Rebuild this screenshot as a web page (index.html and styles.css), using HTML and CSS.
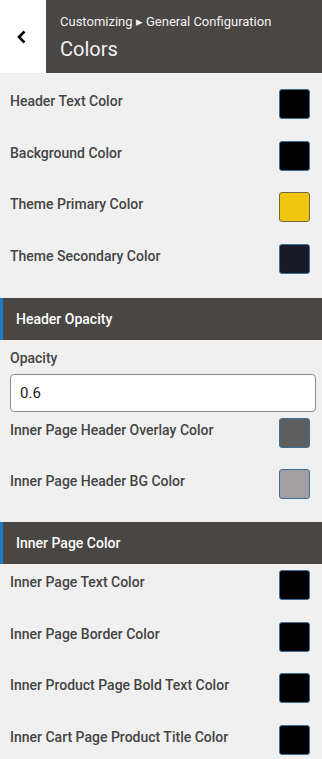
FILE: index.html
```html
<!doctype html>
<html lang="en">
<head>
  <meta charset="UTF-8">
  <meta name="viewport" content="width=device-width, initial-scale=1.0">
  <title>Colors</title>
  <link rel="stylesheet" href="styles.css">
</head>
<body>
  <header class="topbar">
    <a class="back" href="javascript:void(0)">
      <svg width="12" height="14" viewBox="0 0 12 14"><polyline points="8.5,1.5 3,7 8.5,12.5" fill="none" stroke="#000" stroke-width="2.6"/></svg>
    </a>
    <div class="titles">
      <div class="crumb">Customizing &#9656; General Configuration</div>
      <h1>Colors</h1>
    </div>
  </header>

  <div class="group first">
    <div class="row"><span>Header Text Color</span><i class="swatch" style="background:#000"></i></div>
    <div class="row"><span>Background Color</span><i class="swatch" style="background:#000"></i></div>
    <div class="row"><span>Theme Primary Color</span><i class="swatch yellow" style="background:#f1c40f"></i></div>
    <div class="row"><span>Theme Secondary Color</span><i class="swatch" style="background:#1b1a29"></i></div>
  </div>

  <h2 class="section">Header Opacity</h2>
  <div class="field">
    <label>Opacity</label>
    <input type="text" value="0.6">
  </div>
  <div class="group short">
    <div class="row"><span>Inner Page Header Overlay Color</span><i class="swatch" style="background:#5f5e5f"></i></div>
    <div class="row"><span>Inner Page Header BG Color</span><i class="swatch" style="background:#a19f9f"></i></div>
  </div>

  <h2 class="section">Inner Page Color</h2>
  <div class="group">
    <div class="row"><span>Inner Page Text Color</span><i class="swatch" style="background:#000"></i></div>
    <div class="row"><span>Inner Page Border Color</span><i class="swatch" style="background:#000"></i></div>
    <div class="row"><span>Inner Product Page Bold Text Color</span><i class="swatch" style="background:#000"></i></div>
    <div class="row"><span>Inner Cart Page Product Title Color</span><i class="swatch" style="background:#000"></i></div>
  </div>
</body>
</html>
```

FILE: styles.css
```css
body {
  margin: 0;
  background: #f0f0f0;
  font-family: Roboto, "Liberation Sans", sans-serif;
  color: #444;
}
.topbar {
  display: flex;
  height: 73px;
  background: #4a4644;
}
.back {
  display: flex;
  align-items: center;
  justify-content: center;
  width: 46px;
  background: #fff;
  padding-right: 2px;
  box-sizing: border-box;
}
.titles {
  padding: 14px 0 0 14px;
  color: #f2f2f2;
}
.crumb {
  font-size: 13px;
  line-height: 16px;
}
.titles h1 {
  margin: 6px 0 0;
  font-size: 20px;
  font-weight: 400;
  line-height: 26px;
}
.group {
  display: flex;
  flex-direction: column;
  gap: 21.67px;
  padding: 6px 12px 24px 10px;
}
.group.first {
  padding-top: 16px;
}
.group.short {
  gap: 21px;
  padding-bottom: 23px;
}
.row {
  display: flex;
  justify-content: space-between;
  align-items: flex-start;
  height: 30px;
}
.row span {
  font-size: 14px;
  font-weight: 500;
  line-height: 24px;
}
.swatch {
  display: block;
  width: 29px;
  height: 28px;
  border: 1px solid #3f6f97;
  border-radius: 3px;
}
.swatch.yellow {
  border-color: #6b6a3a;
}
.section {
  margin: 0;
  height: 42px;
  padding-left: 13px;
  border-left: 3px solid #1e7bc2;
  background: #4a4644;
  color: #fff;
  font-size: 14px;
  font-weight: 500;
  line-height: 42px;
}
.field {
  padding: 6px 6px 0 10px;
}
.field label {
  display: block;
  font-size: 14px;
  font-weight: 500;
  line-height: 24px;
}
.field input {
  display: block;
  box-sizing: border-box;
  width: 100%;
  height: 38px;
  margin-top: 4px;
  padding: 0 9px;
  border: 1px solid #8c8c8c;
  border-radius: 4px;
  background: #fff;
  font-family: Roboto, "Liberation Sans", sans-serif;
  font-size: 15px;
  color: #222;
}
```
